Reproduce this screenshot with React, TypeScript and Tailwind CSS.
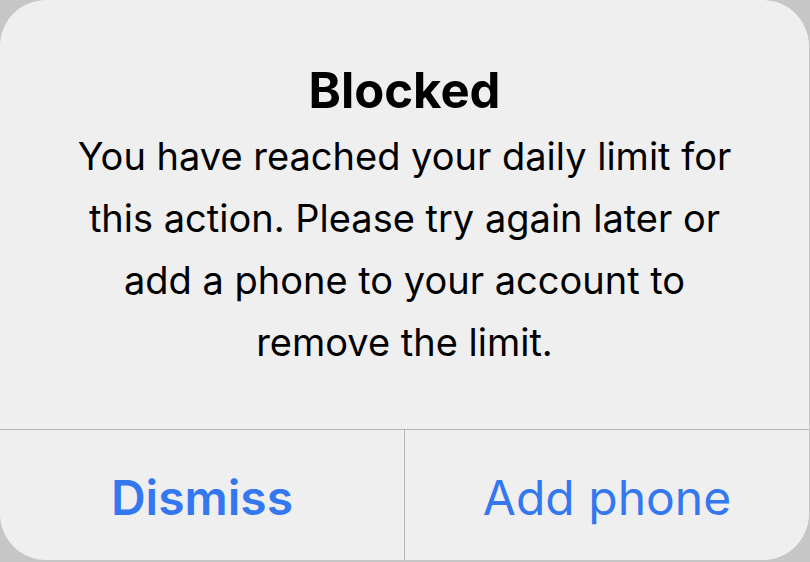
export default function App() {
  return (
    <div className="w-[810px] h-[562px] bg-[#c6c6c6] overflow-hidden font-['Inter',sans-serif]">
      <div className="w-[809px] h-[560px] bg-[#efeff0] rounded-[46px] flex flex-col overflow-hidden">
        {/* Message */}
        <div className="h-[429px] flex flex-col items-center pt-[61px] text-black text-center">
          <h1 className="text-[49px] leading-[60px] font-bold">Blocked</h1>
          <p className="text-[38px] leading-[62px] mt-[4px]">
            You have reached your daily limit for<br />
            this action. Please try again later or<br />
            add a phone to your account to<br />
            remove the limit.
          </p>
        </div>
        {/* Actions */}
        <div className="flex flex-1 border-t border-[#b5b5b7] text-[#3478f0] text-[48px]">
          <button className="flex-1 flex items-center justify-center font-semibold pt-[6px]">Dismiss</button>
          <div className="w-px bg-[#b5b5b7]" />
          <button className="flex-1 flex items-center justify-center pt-[6px]">Add phone</button>
        </div>
      </div>
    </div>
  )
}
